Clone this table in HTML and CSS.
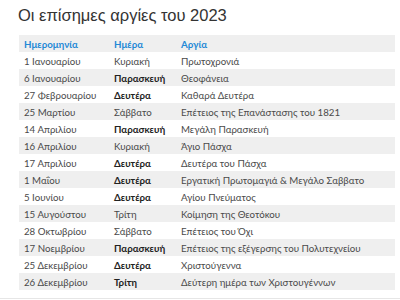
FILE: index.html
```html
<!DOCTYPE html>
<html lang="el">
<head>
<meta charset="utf-8">
<link rel="stylesheet" href="styles.css">
</head>
<body>
<div class="page">
  <h1 class="title">Οι επίσημες αργίες του 2023</h1>
  <table class="holidays">
    <thead>
      <tr><th class="c-date">Ημερομηνία</th><th class="c-day">Ημέρα</th><th>Αργία</th></tr>
    </thead>
    <tbody>
      <tr><td>1 Ιανουαρίου</td><td>Κυριακή</td><td>Πρωτοχρονιά</td></tr>
      <tr><td>6 Ιανουαρίου</td><td class="b">Παρασκευή</td><td>Θεοφάνεια</td></tr>
      <tr><td>27 Φεβρουαρίου</td><td class="b">Δευτέρα</td><td>Καθαρά Δευτέρα</td></tr>
      <tr><td>25 Μαρτίου</td><td>Σάββατο</td><td>Επέτειος της Επανάστασης του 1821</td></tr>
      <tr><td>14 Απριλίου</td><td class="b">Παρασκευή</td><td>Μεγάλη Παρασκευή</td></tr>
      <tr><td>16 Απριλίου</td><td>Κυριακή</td><td>Άγιο Πάσχα</td></tr>
      <tr><td>17 Απριλίου</td><td class="b">Δευτέρα</td><td>Δευτέρα του Πάσχα</td></tr>
      <tr><td>1 Μαΐου</td><td class="b">Δευτέρα</td><td>Εργατική Πρωτομαγιά &amp; Μεγάλο Σαββατο</td></tr>
      <tr><td>5 Ιουνίου</td><td class="b">Δευτέρα</td><td>Αγίου Πνεύματος</td></tr>
      <tr><td>15 Αυγούστου</td><td>Τρίτη</td><td>Κοίμηση της Θεοτόκου</td></tr>
      <tr><td>28 Οκτωβρίου</td><td>Σάββατο</td><td>Επέτειος του Όχι</td></tr>
      <tr><td>17 Νοεμβρίου</td><td class="b">Παρασκευή</td><td>Επέτειος της εξέγερσης του Πολυτεχνείου</td></tr>
      <tr><td>25 Δεκεμβρίου</td><td class="b">Δευτέρα</td><td>Χριστούγεννα</td></tr>
      <tr><td>26 Δεκεμβρίου</td><td class="b">Τρίτη</td><td>Δεύτερη ημέρα των Χριστουγέννων</td></tr>
    </tbody>
  </table>
</div>
<div class="divider"></div>
</body>
</html>
```
FILE: styles.css
```css
html, body {
  margin: 0;
  padding: 0;
  background: #fff;
}
.page {
  padding: 5px 5px 0 19px;
}
.title {
  margin: 0 0 0 -1px;
  font-family: "Liberation Sans", Arial, sans-serif;
  font-weight: normal;
  font-size: 16.5px;
  line-height: 20px;
  color: #333;
  height: 30px;
}
.holidays {
  width: 100%;
  border-collapse: collapse;
  font-family: Lato, Roboto, sans-serif;
  font-size: 9.7px;
  color: #4a4a4a;
}
.holidays th, .holidays td {
  height: 17px;
  padding: 0 5px;
  text-align: left;
  white-space: nowrap;
}
.holidays th {
  color: #2389d6;
  font-weight: bold;
  background: #efefef;
}
.c-date { width: 80px; }
.c-day { width: 57px; }
.holidays tbody tr:nth-child(even) td {
  background: #efefef;
}
.holidays td.b {
  font-weight: bold;
  color: #222;
}
.divider {
  margin-top: 8px;
  border-top: 1px solid #e6e6e6;
}
```
